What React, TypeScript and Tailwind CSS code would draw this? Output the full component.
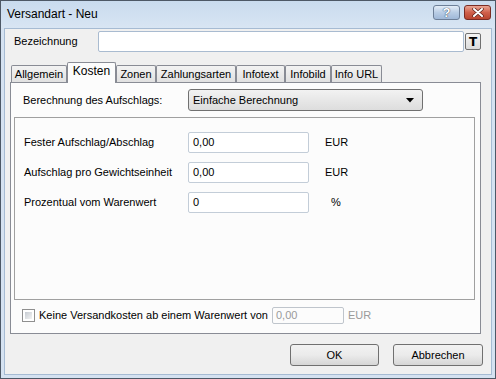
import React from "react";

function Tab({ label, w, selected }: { label: string; w: string; selected?: boolean }) {
  if (selected) {
    return (
      <div
        className={`${w} h-[21px] -mb-px relative z-10 bg-[#fcfcfc] border border-b-0 border-[#898c95] rounded-t-[2px] flex items-start justify-center pt-[2px] text-[12px]`}
      >
        {label}
      </div>
    );
  }
  return (
    <div
      className={`${w} h-[17px] bg-gradient-to-b from-[#f3f3f3] to-[#e1e1e1] border border-b-0 border-[#898c95] rounded-t-[2px] flex items-center justify-center`}
    >
      {label}
    </div>
  );
}

function Field({ label, value, unit, unitClass }: { label: string; value: string; unit: string; unitClass: string }) {
  return (
    <div className="flex items-center h-[21px]">
      <div className="w-[173px] pl-[9px]">{label}</div>
      <div className="w-[121px] h-[21px] border border-[#c3cdd8] rounded-[2px] bg-white flex items-center pl-[4px]">{value}</div>
      <div className={unitClass}>{unit}</div>
    </div>
  );
}

export default function App() {
  return (
    <div className="w-[496px] h-[379px] flex flex-col bg-[#d5e2f1] border border-[#4d5866] font-['Liberation_Sans',Arial,sans-serif] text-[11px] text-black leading-none">
      {/* Title bar */}
      <div className="h-[27px] flex items-start bg-gradient-to-b from-[#c9dbee] to-[#d8e5f3]">
        <div className="pt-[7px] pl-[6px] text-[12px] text-[#000]">Versandart - Neu</div>
        <div className="ml-auto mt-[4px] mr-[4px] flex gap-[4px]">
          <div className="w-[27px] h-[15px] rounded-[3px] border border-[#6d7f98] bg-gradient-to-b from-[#e4edf7] via-[#b9cde5] to-[#9fb8d8] flex items-center justify-center">
            <span className="text-white font-bold text-[13px] leading-none [text-shadow:0_0_1px_#30435e,0_0_1px_#30435e]">?</span>
          </div>
          <div className="w-[27px] h-[15px] rounded-[3px] border border-[#7a2c24] bg-gradient-to-b from-[#e8a493] via-[#d0604b] to-[#b9452f] flex items-center justify-center">
            <svg width="12" height="9" viewBox="0 0 12 9">
              <path d="M2 1 L10 8 M10 1 L2 8" stroke="#5a2018" strokeWidth="3.4" strokeLinecap="round" />
              <path d="M2 1 L10 8 M10 1 L2 8" stroke="#ffffff" strokeWidth="2" strokeLinecap="round" />
            </svg>
          </div>
        </div>
      </div>

      {/* Client area */}
      <div className="flex-1 mx-[3px] mb-[3px] bg-[#f0f0f0] border border-[#a6bbd3] flex flex-col pl-[5px] pr-[8px]">
        {/* Bezeichnung row */}
        <div className="mt-[2px] flex items-center h-[21px]">
          <div className="w-[88px] pl-[4px] text-[11px]">Bezeichnung</div>
          <div className="w-[366px] h-[21px] border border-[#a9bbd0] rounded-[2px] bg-white" />
          <div className="ml-[1px] w-[16px] h-[17px] border border-[#707070] rounded-[2px] bg-gradient-to-b from-[#f4f4f4] to-[#dcdcdc] flex items-center justify-center font-bold text-[12px] font-['DejaVu_Sans',sans-serif]">
            T
          </div>
        </div>

        {/* Tabs */}
        <div className="mt-[10px] flex items-end h-[20px] pl-[1px]">
          <Tab label="Allgemein" w="w-[56px]" />
          <Tab label="Kosten" w="w-[49px]" selected />
          <Tab label="Zonen" w="w-[40px]" />
          <Tab label="Zahlungsarten" w="w-[80px]" />
          <Tab label="Infotext" w="w-[49px]" />
          <Tab label="Infobild" w="w-[46px]" />
          <Tab label="Info URL" w="w-[51px]" />
        </div>

        {/* Tab panel */}
        <div className="w-[471px] h-[252px] border border-[#898c95] bg-[#fcfcfc] flex flex-col">
          <div className="mt-[6px] flex items-center h-[22px]">
            <div className="w-[177px] pl-[12px]">Berechnung des Aufschlags:</div>
            <div className="w-[235px] h-[22px] border border-[#707070] rounded-[3px] bg-gradient-to-b from-[#f2f2f2] to-[#dddddd] flex items-center pl-[4px]">
              <span>Einfache Berechnung</span>
              <svg className="ml-auto mr-[8px]" width="8" height="5" viewBox="0 0 8 5">
                <path d="M0 0 H8 L4 4.5 Z" fill="#000" />
              </svg>
            </div>
          </div>

          <div className="mt-[6px] ml-[3px] w-[461px] h-[183px] border border-[#a0a0a0] flex flex-col pt-[14px] gap-[10px]">
            <Field label="Fester Aufschlag/Abschlag" value="0,00" unit="EUR" unitClass="ml-[16px]" />
            <div className="-mt-[1px]">
              <Field label="Aufschlag pro Gewichtseinheit" value="0,00" unit="EUR" unitClass="ml-[16px]" />
            </div>
            <div className="-mt-[1px]">
              <Field label="Prozentual vom Warenwert" value="0" unit="%" unitClass="ml-[22px]" />
            </div>
          </div>

          <div className="mt-[7px] flex items-center h-[17px]">
            <div className="ml-[11px] w-[13px] h-[13px] border border-[#8f8f8f] bg-white p-[2px]">
              <div className="w-full h-full bg-gradient-to-br from-[#c6cbd2] to-[#f4f4f4]" />
            </div>
            <div className="ml-[4px] w-[233px]">Keine Versandkosten ab einem Warenwert von</div>
            <div className="w-[72px] h-[17px] border border-[#bfc5cc] rounded-[2px] bg-[#fcfcfc] flex items-center pl-[3px] text-[#9a9a9a]">
              0,00
            </div>
            <div className="ml-[4px] text-[#9a9a9a]">EUR</div>
          </div>
        </div>

        {/* Buttons */}
        <div className="mt-[10px] flex justify-end gap-[14px] pr-[0px]">
          <div className="w-[89px] h-[22px] border border-[#707070] rounded-[3px] bg-gradient-to-b from-[#f2f2f2] via-[#ebebeb] to-[#d6d6d6] flex items-center justify-center">
            OK
          </div>
          <div className="w-[90px] h-[22px] border border-[#707070] rounded-[3px] bg-gradient-to-b from-[#f2f2f2] via-[#ebebeb] to-[#d6d6d6] flex items-center justify-center">
            Abbrechen
          </div>
        </div>
      </div>
    </div>
  );
}
